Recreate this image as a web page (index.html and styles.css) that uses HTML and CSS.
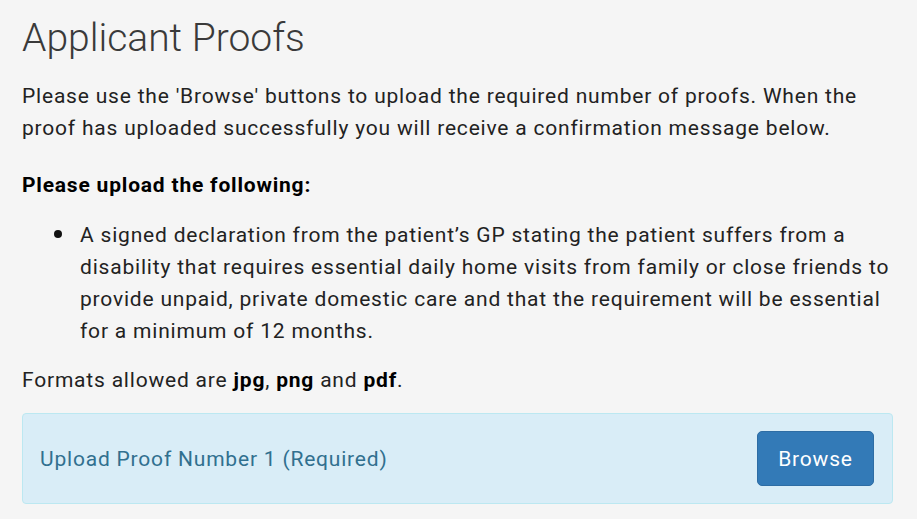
FILE: index.html
```html
<!DOCTYPE html>
<html>
<head>
<meta charset="utf-8">
<link rel="stylesheet" href="styles.css">
</head>
<body>
<div class="page">
  <h1 class="title">Applicant Proofs</h1>
  <p class="intro">Please use the 'Browse' buttons to upload the required number of proofs. When the proof has uploaded successfully you will receive a confirmation message below.</p>
  <p class="lead">Please upload the following:</p>
  <ul class="proofs">
    <li>A signed declaration from the patient’s GP stating the patient suffers from a disability that requires essential daily home visits from family or close friends to provide unpaid, private domestic care and that the requirement will be essential for a minimum of 12 months.</li>
  </ul>
  <p class="formats">Formats allowed are <b>jpg</b>, <b>png</b> and <b>pdf</b>.</p>
  <div class="upload">
    <span class="upload-label">Upload Proof Number 1 (Required)</span>
    <button class="browse">Browse</button>
  </div>
</div>
</body>
</html>
```

FILE: styles.css
```css
html, body {
  margin: 0;
  padding: 0;
  background: #ffffff;
}
.page {
  background: #f5f5f5;
  padding: 14px 24px 15px 22px;
  font-family: Roboto, "Liberation Sans", sans-serif;
  font-size: 21px;
  letter-spacing: 0.8px;
  line-height: 32px;
  color: #222;
}
.title {
  margin: 0;
  font-size: 39px;
  line-height: 48px;
  font-weight: 300;
  letter-spacing: 0;
  color: #3a3a3a;
}
.intro {
  margin: 18px 0 0;
}
.lead {
  margin: 25px 0 0;
  font-weight: 700;
  color: #000;
}
.proofs {
  margin: 18px 0 0;
  padding-left: 58px;
  list-style: none;
}
.proofs li::before {
  content: "";
  display: inline-block;
  width: 8px;
  height: 8px;
  border-radius: 50%;
  background: #111;
  margin-left: -26px;
  margin-right: 18px;
  vertical-align: 4px;
}
.formats {
  margin: 17px 0 0;
}
.formats b {
  color: #000;
}
.upload {
  margin-top: 17px;
  background: #d9edf7;
  border: 1px solid #bce8f1;
  border-radius: 4px;
  padding: 17px 18px 17px 17px;
  display: flex;
  align-items: center;
  justify-content: space-between;
}
.upload-label {
  color: #31708f;
}
.browse {
  width: 117px;
  height: 55px;
  background: #337ab7;
  border: 1px solid #2e6da4;
  border-radius: 5px;
  color: #fff;
  font-family: Roboto, "Liberation Sans", sans-serif;
  font-size: 21px;
  letter-spacing: 0.8px;
  padding: 0;
}
```
